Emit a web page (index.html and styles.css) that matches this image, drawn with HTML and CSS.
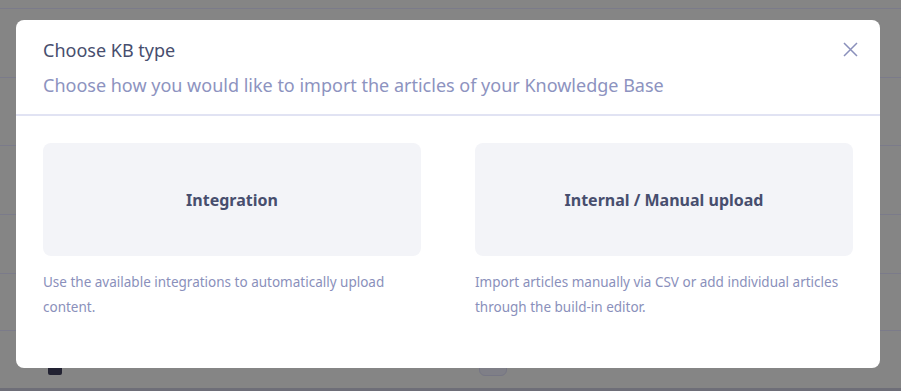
FILE: index.html
```html
<!DOCTYPE html>
<html lang="en">
<head>
    <meta charset="UTF-8">
    <meta name="viewport" content="width=device-width, initial-scale=1.0">
    <title>Choose KB type</title>
    <link rel="stylesheet" href="styles.css">
</head>
<body>
    <!-- Page behind the dialog -->
    <div class="page">
        <div class="pageRow first"></div>
        <div class="pageRow r2"></div>
        <div class="pageRow r3"></div>
        <div class="pageRow r4"></div>
        <div class="pageRow r5"></div>
        <div class="pageRow r6">
            <span class="peekCheck"></span>
            <span class="peekButton"></span>
        </div>
        <div class="pageFooter"></div>
    </div>

    <!-- Dialog -->
    <div class="modal">
        <div class="modalHeader">
            <h2 class="modalTitle">Choose KB type</h2>
            <p class="modalSubtitle">Choose how you would like to import the articles of your Knowledge Base</p>
            <button class="closeButton" type="button" aria-label="Close">
                <svg width="15" height="15" viewBox="0 0 15 15">
                    <path d="M1 1 L14 14 M14 1 L1 14" stroke="#8a90bb" stroke-width="1.5" fill="none"/>
                </svg>
            </button>
        </div>
        <div class="modalBody">
            <div class="option">
                <div class="optionCard">Integration</div>
                <p class="optionText">Use the available integrations to automatically upload content.</p>
            </div>
            <div class="option">
                <div class="optionCard">Internal / Manual upload</div>
                <p class="optionText">Import articles manually via CSV or add individual articles through the build-in editor.</p>
            </div>
        </div>
    </div>
</body>
</html>
```

FILE: styles.css
```css
/* Base */
body {
    margin: 0;
    padding: 0;
    font-family: "Noto Sans", "Open Sans", sans-serif;
    background-color: #858585;
    overflow: hidden;
}

/* Dimmed page behind the dialog */
.page {
    height: 391px;
    display: flex;
    flex-direction: column;
}

.pageRow {
    border-top: 1px solid #7b7b8a;
    flex: none;
    position: relative;
}

.pageRow.first { height: 68px; margin-top: 8px; }
.pageRow.r2 { height: 67px; }
.pageRow.r3 { height: 68px; }
.pageRow.r4 { height: 58px; }
.pageRow.r5 { height: 56px; }
.pageRow.r6 { flex: 1; }

.peekCheck {
    position: absolute;
    left: 48px;
    top: 30px;
    width: 14px;
    height: 14px;
    border-radius: 2px;
    background-color: #222232;
}

.peekButton {
    position: absolute;
    left: 479px;
    top: 25px;
    width: 26px;
    height: 18px;
    border-radius: 6px;
    border: 1px solid #767684;
    background-color: #7f7f87;
}

.pageFooter {
    height: 3px;
    background-color: #6e6e78;
}

/* Dialog */
.modal {
    position: absolute;
    left: 16px;
    top: 20px;
    width: 864px;
    height: 348px;
    background-color: #fff;
    border-radius: 8px;
    box-sizing: border-box;
}

.modalHeader {
    position: relative;
    padding: 18px 27px 16px;
    border-bottom: 2px solid #e1e3f3;
}

.modalTitle {
    margin: 0;
    font-size: 18px;
    line-height: 24px;
    font-weight: 400;
    color: #474e6e;
}

.modalSubtitle {
    margin: 10px 0 0;
    font-size: 18px;
    line-height: 26px;
    color: #8d93c0;
}

.closeButton {
    position: absolute;
    right: 22px;
    top: 22px;
    width: 15px;
    height: 15px;
    padding: 0;
    border: none;
    background: none;
    cursor: pointer;
    display: flex;
}

.modalBody {
    display: grid;
    grid-template-columns: 378px 378px;
    column-gap: 54px;
    padding: 27px 27px 0;
}

.optionCard {
    height: 113px;
    border-radius: 8px;
    background-color: #f3f4f8;
    display: flex;
    align-items: center;
    justify-content: center;
    font-size: 16px;
    font-weight: 700;
    color: #474e6e;
    cursor: pointer;
}

.optionText {
    margin: 14px 0 0;
    font-size: 13.5px;
    line-height: 25px;
    color: #8a90bb;
}
```
